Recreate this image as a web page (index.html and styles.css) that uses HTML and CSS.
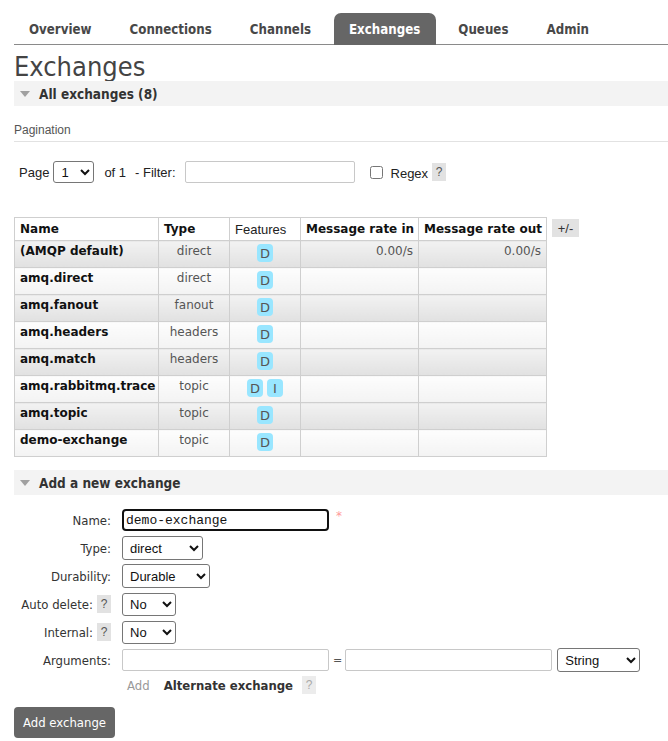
FILE: index.html
```html
<!DOCTYPE html>
<html>
<head>
<meta charset="utf-8">
<link rel="stylesheet" href="styles.css">
</head>
<body>
<div class="page">
  <nav class="tabs">
    <a class="tab">Overview</a>
    <a class="tab">Connections</a>
    <a class="tab">Channels</a>
    <a class="tab active">Exchanges</a>
    <a class="tab">Queues</a>
    <a class="tab">Admin</a>
  </nav>
  <h1 class="title">Exchanges</h1>
  <div class="section-head"><span class="tri"></span>All exchanges (8)</div>

  <div class="pagination-label">Pagination</div>
  <div class="filter-row">
    <span>Page</span>
    <select class="sel sel-page"><option>1</option></select>
    <span class="of">of 1</span>
    <span>- Filter:</span>
    <input class="txt filter-input" type="text">
    <input class="chk" type="checkbox">
    <span class="regex">Regex</span>
    <span class="help">?</span>
  </div>

  <div class="table-wrap">
    <table class="list">
      <thead>
        <tr>
          <th class="c-name">Name</th>
          <th class="c-type">Type</th>
          <th class="c-feat">Features</th>
          <th class="c-in">Message rate in</th>
          <th class="c-out">Message rate out</th>
        </tr>
      </thead>
      <tbody>
        <tr class="alt"><td class="name">(AMQP default)</td><td class="type">direct</td><td class="feat"><span class="badge">D</span></td><td class="rate">0.00/s</td><td class="rate">0.00/s</td></tr>
        <tr><td class="name">amq.direct</td><td class="type">direct</td><td class="feat"><span class="badge">D</span></td><td class="rate"></td><td class="rate"></td></tr>
        <tr class="alt"><td class="name">amq.fanout</td><td class="type">fanout</td><td class="feat"><span class="badge">D</span></td><td class="rate"></td><td class="rate"></td></tr>
        <tr><td class="name">amq.headers</td><td class="type">headers</td><td class="feat"><span class="badge">D</span></td><td class="rate"></td><td class="rate"></td></tr>
        <tr class="alt"><td class="name">amq.match</td><td class="type">headers</td><td class="feat"><span class="badge">D</span></td><td class="rate"></td><td class="rate"></td></tr>
        <tr><td class="name">amq.rabbitmq.trace</td><td class="type">topic</td><td class="feat"><span class="badge">D</span><span class="badge">I</span></td><td class="rate"></td><td class="rate"></td></tr>
        <tr class="alt"><td class="name">amq.topic</td><td class="type">topic</td><td class="feat"><span class="badge">D</span></td><td class="rate"></td><td class="rate"></td></tr>
        <tr><td class="name">demo-exchange</td><td class="type">topic</td><td class="feat"><span class="badge">D</span></td><td class="rate"></td><td class="rate"></td></tr>
      </tbody>
    </table>
    <span class="plusminus">+/-</span>
  </div>

  <div class="section-head add-head"><span class="tri"></span>Add a new exchange</div>

  <div class="form">
    <label class="lbl">Name:</label>
    <div class="ctl"><input class="txt name-input" type="text" value="demo-exchange"><span class="req">*</span></div>

    <label class="lbl">Type:</label>
    <div class="ctl"><select class="sel sel-type"><option>direct</option><option>fanout</option><option>headers</option><option>topic</option></select></div>

    <label class="lbl">Durability:</label>
    <div class="ctl"><select class="sel sel-dur"><option>Durable</option><option>Transient</option></select></div>

    <label class="lbl">Auto delete: <span class="help">?</span></label>
    <div class="ctl"><select class="sel sel-no"><option>No</option><option>Yes</option></select></div>

    <label class="lbl">Internal: <span class="help">?</span></label>
    <div class="ctl"><select class="sel sel-no"><option>No</option><option>Yes</option></select></div>

    <label class="lbl">Arguments:</label>
    <div class="ctl args">
      <input class="txt arg-input" type="text">
      <span class="eq">=</span>
      <input class="txt arg-input" type="text">
      <select class="sel sel-string"><option>String</option><option>Number</option><option>Boolean</option><option>List</option></select>
    </div>

    <span></span>
    <div class="ctl addrow">
      <span class="add-link">Add</span>
      <span class="alt-ex">Alternate exchange</span>
      <span class="help faint">?</span>
    </div>
  </div>

  <button class="btn">Add exchange</button>
</div>
</body>
</html>
```

FILE: styles.css
```css
html, body {
  margin: 0;
  padding: 0;
  background: #fff;
}
body {
  font-family: "DejaVu Sans", Verdana, sans-serif;
  font-size: 13px;
  color: #484848;
}
.page {
  padding: 13px 0 0 14px;
}

/* inputs (base) */
.txt {
  box-sizing: border-box;
  border: 1px solid #c8c8c8;
  border-radius: 2px;
  background: #fff;
  padding: 1px 3px;
  font-family: "Liberation Mono", monospace;
  font-size: 13px;
  color: #111;
  margin: 0;
  outline: none;
}
.sel {
  box-sizing: border-box;
  border: 1px solid #767676;
  border-radius: 3px;
  background: #fff;
  font-family: "Liberation Sans", Arial, sans-serif;
  font-size: 13px;
  color: #111;
  margin: 0;
  padding: 0 3px;
}

/* tabs */
.tabs {
  display: flex;
  gap: 7px;
  border-bottom: 1px solid #8a8a8a;
  height: 31px;
}
.tab {
  display: flex;
  align-items: center;
  height: 32px;
  padding: 0 16px 0 15px;
  font-family: "DejaVu Sans Condensed", "DejaVu Sans", sans-serif;
  font-stretch: condensed;
  font-weight: bold;
  font-size: 13.2px;
  color: #484848;
  border-radius: 7px 7px 0 0;
  box-sizing: border-box;
}
.tab.active {
  background: #666;
  color: #fff;
}

.title {
  margin: 0;
  height: 36px;
  line-height: 44px;
  font-family: "DejaVu Sans Condensed", "DejaVu Sans", sans-serif;
  font-stretch: condensed;
  font-weight: normal;
  font-size: 27px;
  color: #444;
  overflow: hidden;
}

.section-head {
  display: flex;
  align-items: center;
  height: 25px;
  background: #f3f3f3;
  font-family: "DejaVu Sans Condensed", "DejaVu Sans", sans-serif;
  font-stretch: condensed;
  font-weight: bold;
  font-size: 13.5px;
  color: #333;
  padding-left: 6px;
}
.tri {
  width: 0;
  height: 0;
  border-left: 5px solid transparent;
  border-right: 5px solid transparent;
  border-top: 6px solid #a0a0a0;
  margin-right: 9px;
}

.pagination-label {
  margin-top: 17px;
  padding-bottom: 4px;
  border-bottom: 1px solid #e2e2e2;
  font-family: "Liberation Sans", Arial, sans-serif;
  font-size: 12px;
  color: #555;
}

.filter-row {
  display: flex;
  align-items: center;
  height: 24px;
  margin-top: 18px;
  padding-left: 5px;
  font-family: "Liberation Sans", Arial, sans-serif;
  font-size: 13px;
  color: #222;
}
.filter-row .sel-page {
  margin: 0 10px 0 4px;
  width: 41px;
  height: 22px;
}
.of {
  margin-right: 9px;
}
.filter-row .filter-input {
  margin-left: 9px;
  width: 170px;
  height: 22px;
}
.chk {
  margin: 0 0 0 15px;
  width: 13px;
  height: 13px;
}
.regex {
  margin-left: 8px;
  margin-right: 4px;
  padding-top: 3px;
}

.help {
  display: inline-flex;
  align-items: center;
  justify-content: center;
  width: 14px;
  height: 18px;
  background: #e2e2e2;
  color: #555;
  font-family: "Liberation Sans", Arial, sans-serif;
  font-size: 12px;
  font-weight: normal;
}
.help.faint {
  color: #aaa;
  background: #ececec;
}

/* table */
.table-wrap {
  display: flex;
  align-items: flex-start;
  gap: 5px;
  margin-top: 33px;
}
.list {
  border-collapse: collapse;
  table-layout: fixed;
  width: 532px;
  font-family: "DejaVu Sans", Verdana, sans-serif;
  font-size: 12px;
}
.list th, .list td {
  border: 1px solid #cfcfcf;
  padding: 0 5px;
  vertical-align: top;
}
.list th {
  height: 23px;
  box-sizing: border-box;
  background: #fff;
  color: #111;
  font-weight: bold;
  text-align: left;
  vertical-align: middle;
  white-space: nowrap;
}
.list th.c-feat {
  font-weight: normal;
  font-family: "Liberation Sans", Arial, sans-serif;
  font-size: 13px;
  color: #222;
}
.c-name { width: 144px; }
.c-type { width: 71px; }
.c-feat { width: 71px; }
.c-in { width: 118px; }
.c-out { width: 128px; }
.list td {
  height: 27px;
  box-sizing: border-box;
  padding-top: 3px;
  background: linear-gradient(#fdfdfd, #f3f3f3);
}
.list tr.alt td {
  background: linear-gradient(#f2f2f2, #e1e1e1);
}
.list td.name {
  font-weight: bold;
  color: #111;
  white-space: nowrap;
}
.list td.type {
  text-align: center;
  color: #555;
}
.list td.feat {
  text-align: center;
  padding-top: 3px;
}
.list td.rate {
  text-align: right;
  color: #555;
}
.badge {
  display: inline-block;
  width: 16px;
  height: 18px;
  line-height: 19px;
  border-radius: 4px;
  background: #99e6ff;
  color: #555;
  font-family: "DejaVu Sans", sans-serif;
  font-size: 13px;
  text-align: center;
  margin: 0 2px;
}
.plusminus {
  margin-top: 2px;
  display: inline-flex;
  align-items: center;
  justify-content: center;
  width: 27px;
  height: 18px;
  background: #e2e2e2;
  color: #333;
  font-family: "Liberation Sans", Arial, sans-serif;
  font-size: 13px;
}

.add-head {
  margin-top: 13px;
}

/* form */
.form {
  display: grid;
  grid-template-columns: 97px auto;
  column-gap: 11px;
  row-gap: 4px;
  margin-top: 13px;
  grid-auto-rows: 24px;
  align-items: center;
}
.lbl {
  text-align: right;
  font-family: "DejaVu Sans Condensed", "Liberation Sans", sans-serif;
  font-stretch: condensed;
  font-size: 13px;
  color: #333;
  display: flex;
  justify-content: flex-end;
  align-items: center;
  gap: 4px;
}
.ctl {
  display: flex;
  align-items: center;
}
.name-input {
  width: 207px;
  height: 22px;
  border: 2px solid #111;
  border-radius: 4px;
  padding: 0 2px;
}
.req {
  color: #ff9999;
  margin-left: 7px;
  font-size: 12px;
  align-self: flex-start;
}
.sel-type { width: 81px; height: 24px; }
.sel-dur { width: 88px; height: 24px; }
.sel-no { width: 54px; height: 23px; }
.arg-input { width: 207px; height: 22px; }
.eq {
  margin: 0 3px 0 4px;
  font-size: 11px;
  color: #555;
}
.sel-string { width: 83px; height: 24px; margin-left: 5px; }
.addrow {
  align-self: start;
  padding-left: 5px;
  font-family: "DejaVu Sans Condensed", "Liberation Sans", sans-serif;
  font-stretch: condensed;
  font-size: 13px;
}
.add-link {
  color: #999;
  margin-right: 14px;
}
.alt-ex {
  font-weight: bold;
  color: #333;
  margin-right: 9px;
}

.btn {
  display: block;
  margin-top: 7px;
  height: 31px;
  width: 101px;
  border: none;
  border-radius: 4px;
  background: #666;
  color: #fff;
  font-family: "DejaVu Sans Condensed", "Liberation Sans", sans-serif;
  font-stretch: condensed;
  font-size: 13px;
  padding: 0;
}
```
